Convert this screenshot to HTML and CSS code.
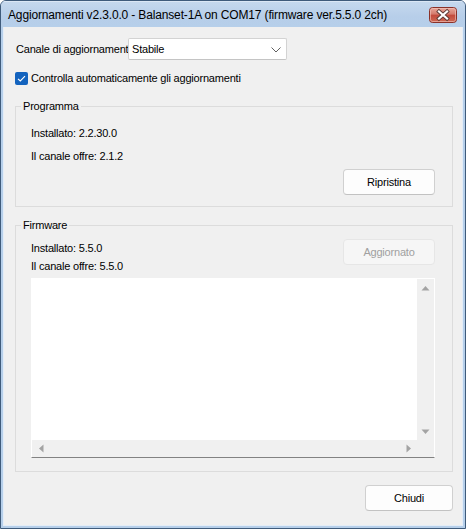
FILE: index.html
```html
<!DOCTYPE html>
<html lang="it">
<head>
<meta charset="utf-8">
<title>Aggiornamenti</title>
<link rel="stylesheet" href="styles.css">
</head>
<body>
<div class="window">
  <div class="titlebar">
    <span class="title">Aggiornamenti v2.3.0.0 - Balanset-1A on COM17 (firmware ver.5.5.0 2ch)</span>
    <span class="close">
      <svg width="28" height="16" viewBox="0 0 28 16">
        <defs>
          <linearGradient id="cg" x1="0" y1="0" x2="0" y2="1">
            <stop offset="0" stop-color="#e9a99c"/>
            <stop offset="0.45" stop-color="#d47a6c"/>
            <stop offset="0.5" stop-color="#c2493b"/>
            <stop offset="1" stop-color="#cf6a55"/>
          </linearGradient>
        </defs>
        <rect x="0.5" y="0.5" width="27" height="15" rx="3" ry="3" fill="url(#cg)" stroke="#8a3129"/>
        <rect x="1.5" y="1.5" width="25" height="13" rx="2" ry="2" fill="none" stroke="#f2c7bf" stroke-opacity="0.6"/>
        <path d="M10 4.5 L18 11.5 M18 4.5 L10 11.5" stroke="#5a3a36" stroke-width="4" stroke-linecap="square"/>
        <path d="M10 4.5 L18 11.5 M18 4.5 L10 11.5" stroke="#ffffff" stroke-width="2.2" stroke-linecap="square"/>
      </svg>
    </span>
  </div>
  <div class="client">
    <div class="channel-row">
      <span class="channel-label">Canale di aggiornament</span>
      <div class="combo">
        <span class="combo-text">Stabile</span>
        <svg class="chevron" width="10" height="6" viewBox="0 0 10 6"><path d="M0.5 0.5 L5 5 L9.5 0.5" fill="none" stroke="#606060" stroke-width="1"/></svg>
      </div>
    </div>
    <div class="check-row">
      <span class="checkbox">
        <svg width="13" height="13" viewBox="0 0 13 13"><path d="M3 6.8 L5.3 9 L10 4.2" fill="none" stroke="#ffffff" stroke-width="1.1"/></svg>
      </span>
      <span class="check-label">Controlla automaticamente gli aggiornamenti</span>
    </div>

    <fieldset class="group group-prog">
      <legend>Programma</legend>
      <div class="line line-first">Installato: 2.2.30.0</div>
      <div class="line line-second">Il canale offre: 2.1.2</div>
      <div class="actions"><span class="btn btn-wide">Ripristina</span></div>
    </fieldset>

    <fieldset class="group group-fw">
      <legend>Firmware</legend>
      <div class="fw-head">
        <div class="fw-lines">
          <div class="line">Installato: 5.5.0</div>
          <div class="line">Il canale offre: 5.5.0</div>
        </div>
        <span class="btn btn-wide btn-disabled">Aggiornato</span>
      </div>
      <div class="log">
        <div class="log-area"></div>
        <div class="vscroll">
          <span class="arrow-cell"><svg width="9" height="6" viewBox="0 0 9 6"><path d="M0.5 5.5 L4.5 1 L8.5 5.5 Z" fill="#a3a3a3"/></svg></span>
          <span class="arrow-cell"><svg width="9" height="6" viewBox="0 0 9 6"><path d="M0.5 0.5 L4.5 5 L8.5 0.5 Z" fill="#a3a3a3"/></svg></span>
        </div>
        <div class="hscroll">
          <span class="arrow-cell"><svg width="6" height="9" viewBox="0 0 6 9"><path d="M5.5 0.5 L1 4.5 L5.5 8.5 Z" fill="#a3a3a3"/></svg></span>
          <span class="arrow-cell"><svg width="6" height="9" viewBox="0 0 6 9"><path d="M0.5 0.5 L5 4.5 L0.5 8.5 Z" fill="#a3a3a3"/></svg></span>
        </div>
        <div class="corner"></div>
      </div>
    </fieldset>

    <div class="footer"><span class="btn btn-close">Chiudi</span></div>
  </div>
</div>
</body>
</html>
```

FILE: styles.css
```css
* { box-sizing: border-box; }
html, body { margin: 0; padding: 0; }
body {
  width: 466px;
  height: 529px;
  overflow: hidden;
  background: #ffffff;
  font-family: "Liberation Sans", Arial, sans-serif;
  font-size: 11px;
  letter-spacing: -0.2px;
  color: #000;
}

.window {
  width: 466px;
  height: 529px;
  display: flex;
  flex-direction: column;
  border: 1px solid #3f5b7b;
  border-radius: 6px 6px 0 0;
  background: #b6cfea;
  overflow: hidden;
}

.titlebar {
  height: 26px;
  flex: none;
  display: flex;
  justify-content: space-between;
  align-items: flex-start;
  padding: 0 7px 0 7px;
  background: linear-gradient(#c6d9ee, #b7cee9 60%, #b6cfea);
  box-shadow: inset 0 1px 0 #dbe7f5;
}
.title {
  font-size: 12px;
  letter-spacing: -0.15px;
  line-height: 14px;
  padding-top: 7px;
  white-space: nowrap;
  color: #000;
}
.close {
  display: block;
  width: 28px;
  height: 16px;
  margin-top: 6px;
  margin-right: 1px;
}
.close svg { display: block; }

.client {
  flex: 1;
  margin: 0 2px 2px 2px;
  border-left: 1px solid #e4edf7;
  border-right: 1px solid #e4edf7;
  border-bottom: 1px solid #e4edf7;
  background: #f0f0f0;
  padding: 11px 9px 0 11px;
  display: flex;
  flex-direction: column;
}

.channel-row {
  display: flex;
  align-items: center;
  height: 22px;
}
.channel-label {
  width: 112px;
  margin-left: 1px;
  line-height: 13px;
  white-space: nowrap;
}
.combo {
  width: 159px;
  height: 22px;
  background: #ffffff;
  border: 1px solid #d3d3d3;
  border-bottom-color: #c4c4c4;
  border-radius: 2px;
  display: flex;
  align-items: center;
  justify-content: space-between;
  padding: 0 5px 0 3px;
}
.combo-text { line-height: 13px; }
.chevron { display: block; margin-top: 1px; }

.check-row {
  display: flex;
  align-items: center;
  height: 13px;
  margin-top: 12px;
}
.checkbox {
  width: 13px;
  height: 13px;
  border-radius: 2px;
  background: #1363be;
  display: block;
}
.checkbox svg { display: block; }
.check-label {
  margin-left: 3px;
  line-height: 13px;
  white-space: nowrap;
}

.group {
  margin: 0;
  min-width: 0;
  border: 1px solid #dcdcdc;
  padding: 0 17px 0 15px;
}
.group legend {
  line-height: 13px;
  height: 13px;
  padding: 0 2px;
  margin-left: -10px;
}
.group-prog {
  margin-top: 15px;
  padding-bottom: 11px;
}
.group-fw {
  margin-top: 12px;
  padding-bottom: 13px;
}

.line {
  line-height: 13px;
  height: 13px;
  white-space: nowrap;
}
.line-first { margin-top: 14px; }
.line-second { margin-top: 10px; }

.actions {
  display: flex;
  justify-content: flex-end;
  margin-top: 6px;
}

.btn {
  display: flex;
  align-items: center;
  justify-content: center;
  height: 26px;
  background: #fdfdfd;
  border: 1px solid #d0d0d0;
  border-bottom-color: #c2c2c2;
  border-radius: 4px;
  line-height: 13px;
  color: #000;
}
.btn-wide { width: 92px; }
.btn-disabled {
  background: #f6f6f6;
  border-color: #e6e6e6;
  color: #a0a0a0;
}

.fw-head {
  display: flex;
  justify-content: space-between;
  align-items: flex-start;
  margin-top: 7px;
}
.fw-lines {
  display: flex;
  flex-direction: column;
  gap: 5px;
  padding-top: 3px;
}

.log {
  margin-top: 5px;
  height: 180px;
  border: 1px solid #ffffff;
  border-bottom-color: #828282;
  display: grid;
  grid-template-columns: 1fr 17px;
  grid-template-rows: 1fr 17px;
}
.log-area { background: #ffffff; }
.vscroll {
  background: #f0f0f0;
  display: flex;
  flex-direction: column;
  justify-content: space-between;
}
.hscroll {
  background: #f0f0f0;
  display: flex;
  justify-content: space-between;
}
.corner { background: #f0f0f0; }
.arrow-cell {
  width: 17px;
  height: 17px;
  display: flex;
  align-items: center;
  justify-content: center;
}
.arrow-cell svg { display: block; }

.footer {
  display: flex;
  justify-content: flex-end;
  margin-top: 13px;
}
.btn-close { width: 88px; }
```
